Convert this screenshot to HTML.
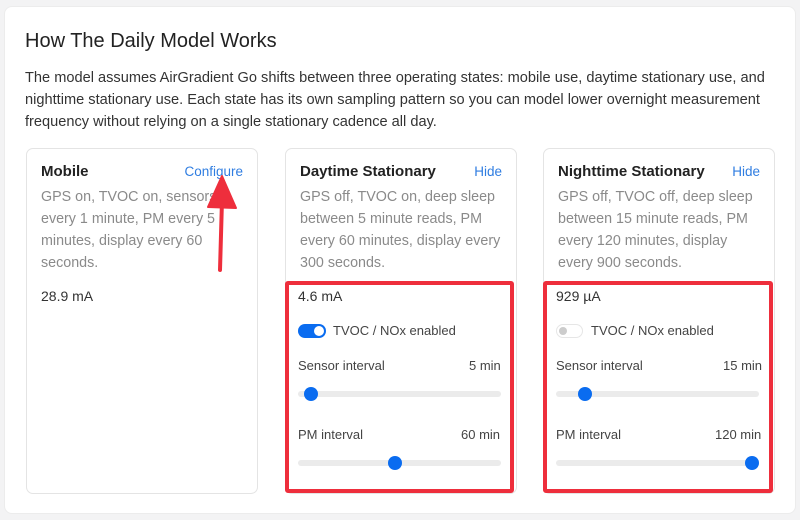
<!DOCTYPE html>
<html><head><meta charset="utf-8"><style>
*{margin:0;padding:0;box-sizing:border-box}
body{width:800px;height:520px;background:#f3f3f4;font-family:"Liberation Sans",sans-serif;position:relative;overflow:hidden}
.panel{position:absolute;left:4px;top:6px;width:792px;height:508px;background:#fff;border:1px solid #ececec;border-radius:8px}
.a{position:absolute;white-space:nowrap}
h1{position:absolute;left:25px;top:30px;font-size:20px;font-weight:normal;color:#222}
.p{position:absolute;left:25px;top:67px;font-size:14.6px;line-height:22px;color:#333;width:770px}
.card{position:absolute;top:148px;width:232px;height:346px;border:1px solid #e4e4e4;border-radius:7px;background:#fff}
.t{position:absolute;left:14px;top:14px;font-size:15px;font-weight:bold;color:#222}
.lk{position:absolute;right:14px;top:15px;font-size:13.5px;color:#2f7de1}
.d{position:absolute;left:14px;top:37px;font-size:14.3px;line-height:22px;color:#8a8a8a;width:210px}
.v{position:absolute;left:14px;top:139px;font-size:14px;color:#333}
.red{position:absolute;border:4px solid #ee2e3c;border-radius:3px}
.lab{position:absolute;font-size:13px;color:#444}
.tr{position:absolute;height:6px;border-radius:3px;background:#ebebeb}
.kn{position:absolute;width:14px;height:14px;border-radius:50%;background:#0a6cf0}
</style></head><body>
<div class="panel"></div>
<h1>How The Daily Model Works</h1>
<div class="p">The model assumes AirGradient Go shifts between three operating states: mobile use, daytime stationary use, and nighttime stationary use. Each state has its own sampling pattern so you can model lower overnight measurement frequency without relying on a single stationary cadence all day.</div>

<div class="card" style="left:26px"><div class="t">Mobile</div><div class="lk">Configure</div>
<div class="d">GPS on, TVOC on, sensors<br>every 1 minute, PM every 5<br>minutes, display every 60<br>seconds.</div><div class="v">28.9 mA</div></div>
<div class="card" style="left:285px"><div class="t">Daytime Stationary</div><div class="lk">Hide</div>
<div class="d">GPS off, TVOC on, deep sleep<br>between 5 minute reads, PM<br>every 60 minutes, display every<br>300 seconds.</div></div>
<div class="card" style="left:543px"><div class="t">Nighttime Stationary</div><div class="lk">Hide</div>
<div class="d">GPS off, TVOC off, deep sleep<br>between 15 minute reads, PM<br>every 120 minutes, display<br>every 900 seconds.</div></div>

<div class="red" style="left:285px;top:281px;width:229px;height:212px"></div>
<div class="red" style="left:543px;top:281px;width:230px;height:212px"></div>

<div class="a" style="left:298px;top:288px;font-size:14px;color:#333">4.6 mA</div>
<div class="a" style="left:298px;top:324px;width:28px;height:14px;border-radius:7px;background:#0a6cf0"><div style="position:absolute;right:2px;top:2px;width:10px;height:10px;border-radius:50%;background:#fff"></div></div>
<div class="lab" style="left:333px;top:323px">TVOC / NOx enabled</div>
<div class="lab" style="left:298px;top:358px">Sensor interval</div><div class="lab" style="left:469px;top:358px">5 min</div>
<div class="tr" style="left:298px;top:391px;width:203px"></div><div class="kn" style="left:304px;top:387px"></div>
<div class="lab" style="left:298px;top:427px">PM interval</div><div class="lab" style="left:461px;top:427px">60 min</div>
<div class="tr" style="left:298px;top:460px;width:203px"></div><div class="kn" style="left:388px;top:456px"></div>

<div class="a" style="left:556px;top:288px;font-size:14px;color:#333">929 µA</div>
<div class="a" style="left:556px;top:324px;width:27px;height:14px;border-radius:7px;background:#fff;border:1px solid #e6e6e6"><div style="position:absolute;left:2px;top:2px;width:8px;height:8px;border-radius:50%;background:#ccc"></div></div>
<div class="lab" style="left:591px;top:323px">TVOC / NOx enabled</div>
<div class="lab" style="left:556px;top:358px">Sensor interval</div><div class="lab" style="left:723px;top:358px">15 min</div>
<div class="tr" style="left:556px;top:391px;width:203px"></div><div class="kn" style="left:578px;top:387px"></div>
<div class="lab" style="left:556px;top:427px">PM interval</div><div class="lab" style="left:715px;top:427px">120 min</div>
<div class="tr" style="left:556px;top:460px;width:203px"></div><div class="kn" style="left:745px;top:456px"></div>

<svg class="a" style="left:0;top:0" width="800" height="520"><path d="M220 270 L222 200" stroke="#ee2e3c" stroke-width="4" stroke-linecap="round"/><path d="M222 176 L236 208 L208 207 Z" fill="#ee2e3c" stroke="#ee2e3c" stroke-width="2" stroke-linejoin="round"/></svg>
</body></html>
